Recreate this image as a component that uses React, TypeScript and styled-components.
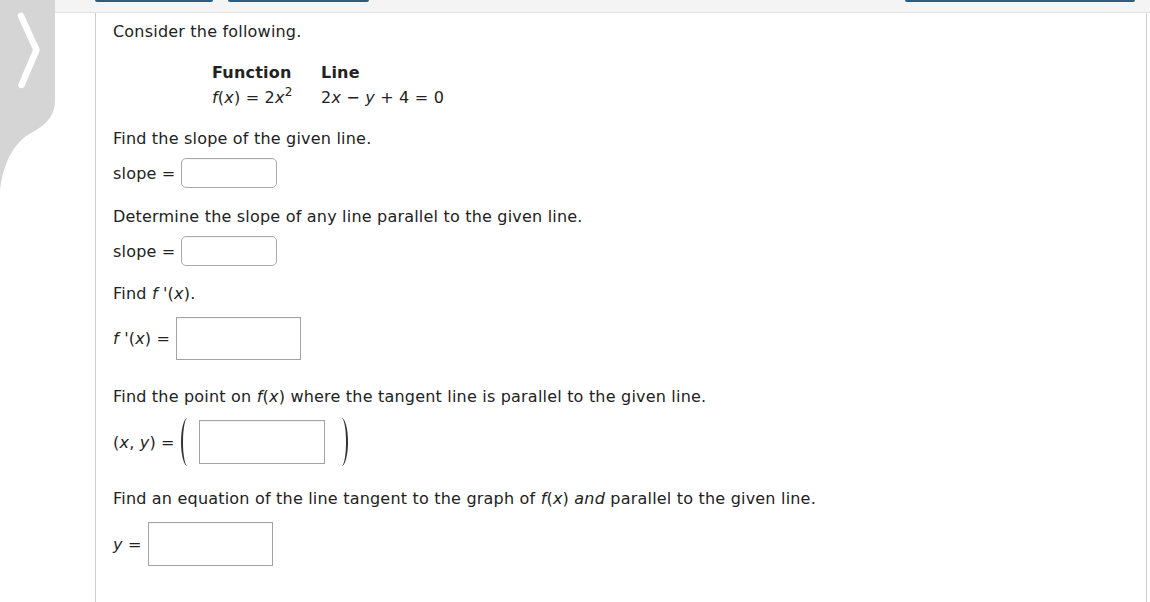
import React from 'react';
import styled, { createGlobalStyle } from 'styled-components';

const GlobalStyle = createGlobalStyle`
  html, body {
    margin: 0;
    padding: 0;
    background: #ffffff;
  }
  body {
    font-family: 'DejaVu Sans', Verdana, sans-serif;
    color: #222222;
  }
`;

function App(): React.ReactElement {
  return (
    <>
      <GlobalStyle />
      <Page>
        <SideHandle>
          <svg width="60" height="192" viewBox="0 0 60 192">
            <path
              d="M0 0 H55 V100 C55 116 46 125 31 133 C15 142 4 160 0 190 Z"
              fill="#d5d5d5"
            />
            <path
              d="M21 16 L36.5 50 L21.5 85"
              fill="none"
              stroke="#ffffff"
              strokeWidth="6.5"
              strokeLinecap="round"
              strokeLinejoin="round"
            />
          </svg>
        </SideHandle>
        <TopBar>
          <Tab $width={118} />
          <Tab $width={141} $gap={15} />
          <Tab $width={230} $push />
        </TopBar>
        <Body>
          <Gutter />
          <Panel>
            <Para $top={0}>Consider the following.</Para>
            <Table>
              <Head>Function</Head>
              <Head>Line</Head>
              <Cell>
                <I>f</I>(<I>x</I>) = 2<I>x</I>
                <Sup>2</Sup>
              </Cell>
              <Cell>
                2<I>x</I> − <I>y</I> + 4 = 0
              </Cell>
            </Table>

            <Para $top={21}>Find the slope of the given line.</Para>
            <AnswerRow $top={9} $height={30}>
              <Label>slope =</Label>
              <Input $w={96} $h={30} $round />
            </AnswerRow>

            <Para $top={19}>Determine the slope of any line parallel to the given line.</Para>
            <AnswerRow $top={9} $height={30}>
              <Label>slope =</Label>
              <Input $w={96} $h={30} $round />
            </AnswerRow>

            <Para $top={18}>
              Find <I>f</I> '(<I>x</I>).
            </Para>
            <AnswerRow $top={13} $height={43}>
              <Label>
                <I>f</I> '(<I>x</I>) =
              </Label>
              <Input $w={125} $h={43} />
            </AnswerRow>

            <Para $top={27}>
              Find the point on <I>f</I>(<I>x</I>) where the tangent line is parallel to the given
              line.
            </Para>
            <AnswerRow $top={13} $height={44}>
              <Label>
                (<I>x</I>, <I>y</I>) =
              </Label>
              <Paren />
              <Input $w={126} $h={44} />
              <Paren $right />
            </AnswerRow>

            <Para $top={25}>
              Find an equation of the line tangent to the graph of <I>f</I>(<I>x</I>){' '}
              <I>and</I> parallel to the given line.
            </Para>
            <AnswerRow $top={13} $height={44}>
              <Label>
                <I>y</I> =
              </Label>
              <Input $w={125} $h={44} />
            </AnswerRow>
          </Panel>
        </Body>
      </Page>
    </>
  );
}

export default App;

const Page = styled.div`
  width: 1150px;
  height: 602px;
  display: flex;
  flex-direction: column;
  overflow: hidden;
  font-size: 16px;
  letter-spacing: 0.2px;
`;

const SideHandle = styled.div`
  position: absolute;
  left: 0;
  top: 0;
  z-index: 2;
  line-height: 0;
`;

const TopBar = styled.div`
  height: 12px;
  flex: none;
  display: flex;
  align-items: flex-start;
  padding-left: 95px;
  padding-right: 15px;
  background: #f4f4f4;
  border-bottom: 1px solid #e2e2e2;
`;

const Tab = styled.div<{ $width: number; $gap?: number; $push?: boolean }>`
  width: ${(p) => p.$width}px;
  height: 2px;
  margin-left: ${(p) => (p.$push ? 'auto' : `${p.$gap ?? 0}px`)};
  background: #2a5d84;
  border-radius: 0 0 3px 3px;
`;

const Body = styled.div`
  flex: 1;
  display: flex;
`;

const Gutter = styled.div`
  width: 95px;
  flex: none;
`;

const Panel = styled.div`
  width: 1052px;
  flex: none;
  border-left: 1px solid #cfcfcf;
  border-right: 1px solid #cfcfcf;
  padding: 9px 0 0 17px;
  box-sizing: border-box;
`;

const Para = styled.div<{ $top: number }>`
  margin-top: ${(p) => p.$top}px;
  line-height: 20px;
  white-space: nowrap;
`;

const I = styled.i`
  font-style: italic;
`;

const Sup = styled.sup`
  font-size: 12px;
  line-height: 0;
  vertical-align: 7px;
`;

const Table = styled.div`
  display: grid;
  grid-template-columns: 109px auto;
  row-gap: 5px;
  margin: 21px 0 0 99px;
  line-height: 20px;
`;

const Head = styled.div`
  font-weight: bold;
`;

const Cell = styled.div`
  white-space: nowrap;
`;

const AnswerRow = styled.div<{ $top: number; $height: number }>`
  margin-top: ${(p) => p.$top}px;
  height: ${(p) => p.$height}px;
  display: flex;
  align-items: center;
`;

const Label = styled.span`
  margin-right: 6px;
  white-space: nowrap;
`;

const Input = styled.div<{ $w: number; $h: number; $round?: boolean }>`
  width: ${(p) => p.$w}px;
  height: ${(p) => p.$h}px;
  box-sizing: border-box;
  border: 1px solid ${(p) => (p.$round ? '#a9a9a9' : '#a3a3a3')};
  border-radius: ${(p) => (p.$round ? '5px' : '0')};
  background: #ffffff;
  box-shadow: inset 0 1px 1px rgba(0, 0, 0, 0.04);
`;

const Paren = styled.span<{ $right?: boolean }>`
  width: 13px;
  height: 48px;
  box-sizing: border-box;
  border-radius: 50%;
  ${(p) =>
    p.$right
      ? 'border-right: 2px solid #333; margin-left: 10px;'
      : 'border-left: 2px solid #333; margin-right: 5px;'}
`;
